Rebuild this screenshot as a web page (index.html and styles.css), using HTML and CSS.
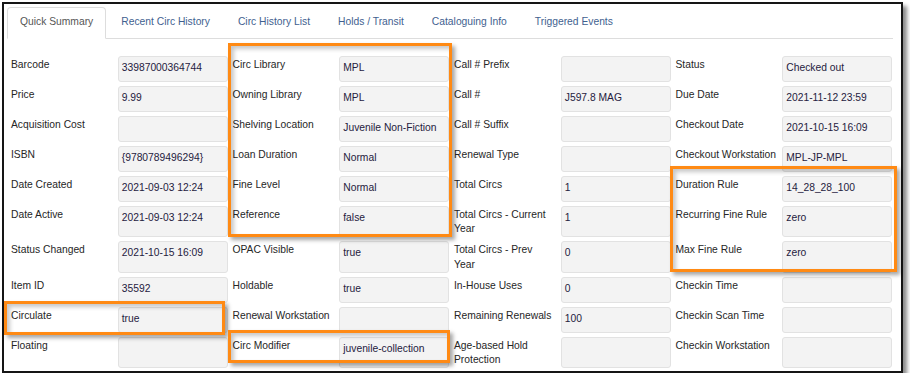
FILE: index.html
```html
<!DOCTYPE html>
<html lang="en">
<head>
  <meta charset="UTF-8" />
  <meta name="viewport" content="width=device-width, initial-scale=1.0" />
  <title>Item Status - Quick Summary</title>
  <link rel="stylesheet" href="styles.css">
</head>
<body>
  <div class="frame">
    <ul class="nav-tabs">
      <li class="active"><a>Quick Summary</a></li>
      <li><a>Recent Circ History</a></li>
      <li><a>Circ History List</a></li>
      <li><a>Holds / Transit</a></li>
      <li><a>Cataloguing Info</a></li>
      <li><a>Triggered Events</a></li>
    </ul>

    <div class="summary-grid">
      <div class="lbl">Barcode</div><div class="val">33987000364744</div>
      <div class="lbl">Circ Library</div><div class="val">MPL</div>
      <div class="lbl">Call # Prefix</div><div class="val"></div>
      <div class="lbl">Status</div><div class="val">Checked out</div>

      <div class="lbl">Price</div><div class="val">9.99</div>
      <div class="lbl">Owning Library</div><div class="val">MPL</div>
      <div class="lbl">Call #</div><div class="val">J597.8 MAG</div>
      <div class="lbl">Due Date</div><div class="val">2021-11-12 23:59</div>

      <div class="lbl">Acquisition Cost</div><div class="val"></div>
      <div class="lbl">Shelving Location</div><div class="val">Juvenile Non-Fiction</div>
      <div class="lbl">Call # Suffix</div><div class="val"></div>
      <div class="lbl">Checkout Date</div><div class="val">2021-10-15 16:09</div>

      <div class="lbl">ISBN</div><div class="val">{9780789496294}</div>
      <div class="lbl">Loan Duration</div><div class="val">Normal</div>
      <div class="lbl">Renewal Type</div><div class="val"></div>
      <div class="lbl">Checkout Workstation</div><div class="val">MPL-JP-MPL</div>

      <div class="lbl">Date Created</div><div class="val">2021-09-03 12:24</div>
      <div class="lbl">Fine Level</div><div class="val">Normal</div>
      <div class="lbl">Total Circs</div><div class="val">1</div>
      <div class="lbl">Duration Rule</div><div class="val">14_28_28_100</div>

      <div class="lbl">Date Active</div><div class="val">2021-09-03 12:24</div>
      <div class="lbl">Reference</div><div class="val">false</div>
      <div class="lbl">Total Circs - Current Year</div><div class="val">1</div>
      <div class="lbl">Recurring Fine Rule</div><div class="val">zero</div>

      <div class="lbl">Status Changed</div><div class="val">2021-10-15 16:09</div>
      <div class="lbl">OPAC Visible</div><div class="val">true</div>
      <div class="lbl">Total Circs - Prev<br>Year</div><div class="val">0</div>
      <div class="lbl">Max Fine Rule</div><div class="val">zero</div>

      <div class="lbl">Item ID</div><div class="val">35592</div>
      <div class="lbl">Holdable</div><div class="val">true</div>
      <div class="lbl">In-House Uses</div><div class="val">0</div>
      <div class="lbl">Checkin Time</div><div class="val"></div>

      <div class="lbl">Circulate</div><div class="val">true</div>
      <div class="lbl">Renewal Workstation</div><div class="val"></div>
      <div class="lbl">Remaining Renewals</div><div class="val">100</div>
      <div class="lbl">Checkin Scan Time</div><div class="val"></div>

      <div class="lbl">Floating</div><div class="val"></div>
      <div class="lbl">Circ Modifier</div><div class="val">juvenile-collection</div>
      <div class="lbl">Age-based Hold Protection</div><div class="val"></div>
      <div class="lbl">Checkin Workstation</div><div class="val"></div>
    </div>
  </div>

  <!-- callout boxes drawn over the screenshot -->
  <div class="callout callout-library"></div>
  <div class="callout callout-rules"></div>
  <div class="callout callout-circulate"></div>
  <div class="callout callout-modifier"></div>
</body>
</html>
```

FILE: styles.css
```css
body {
  font-family: "Liberation Sans", Arial, sans-serif;
  font-size: 10.3px;
  line-height: 1.428;
  color: #2a2a2a;
  margin: 0;
  padding: 0;
  background: #fff;
}
.frame {
  box-sizing: border-box;
  width: 901px;
  margin: 2px 0 0 2px;
  padding: 3px 8px 3px 3px;
  border: 2px solid #151515;
  background: #fff;
  box-shadow: 4px 4px 4px rgba(0, 0, 0, 0.45);
}
.nav-tabs {
  display: flex;
  list-style: none;
  margin: 0 0 17px;
  padding: 0;
  border-bottom: 1px solid #ddd;
}
.nav-tabs li {
  margin: 0 2px -1px 0;
}
.nav-tabs a {
  display: block;
  padding: 7px 12px 8px;
  border: 1px solid transparent;
  border-radius: 4px 4px 0 0;
  color: #3f5f8f;
}
.nav-tabs .active a {
  color: #555;
  background: #fff;
  border-color: #ddd #ddd transparent;
}
.summary-grid {
  display: grid;
  grid-template-columns: repeat(8, 1fr);
  row-gap: 4px;
}
.lbl {
  padding: 2px 4px 0 4px;
  color: #262626;
}
.val {
  min-height: 16px;
  padding: 4px 3px;
  margin-right: 1px;
  background: #f3f3f3;
  border: 1px solid #e2e2e2;
  border-radius: 3px;
  color: #1f2140;
}
.callout {
  position: absolute;
  border: 3px solid #ff8a14;
  box-shadow: 3px 3px 4px rgba(0, 0, 0, 0.35), inset 3px 3px 4px rgba(0, 0, 0, 0.22);
  box-sizing: border-box;
}
.callout-library {
  left: 228px;
  top: 43px;
  width: 224px;
  height: 194px;
}
.callout-rules {
  left: 670px;
  top: 166px;
  width: 227px;
  height: 106px;
}
.callout-circulate {
  left: 4px;
  top: 301px;
  width: 221px;
  height: 34px;
}
.callout-modifier {
  left: 228px;
  top: 330px;
  width: 222px;
  height: 33px;
}
```
